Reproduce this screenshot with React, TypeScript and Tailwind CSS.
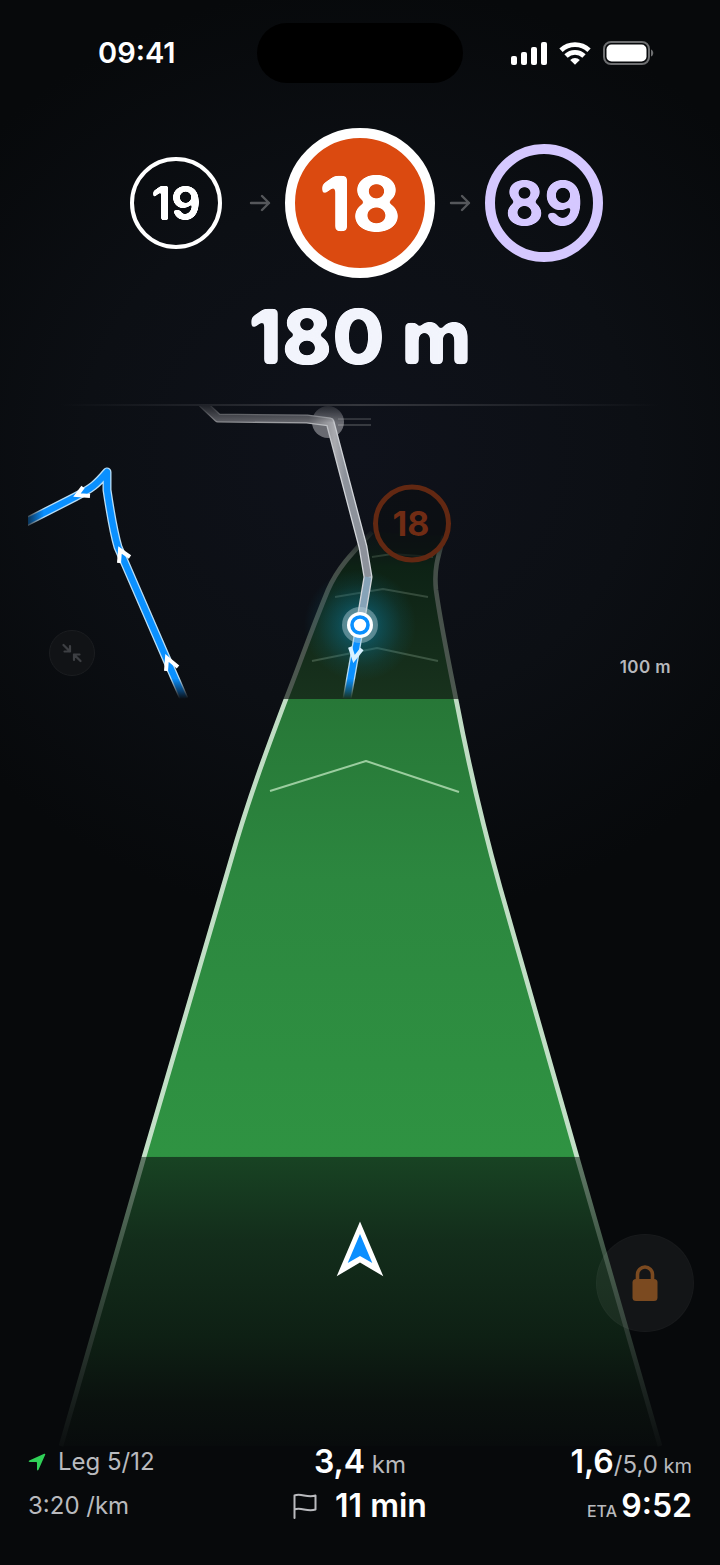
import type { ReactNode } from 'react';

type MarkerVariant = 'passed' | 'current' | 'next';

const markerStyles: Record<MarkerVariant, string> = {
    passed: 'size-[92px] border-4 border-white text-white text-[46px]',
    current: 'size-[150px] border-[10px] border-white bg-[#db4a10] text-white text-[76px]',
    next: 'size-[118px] border-[10px] border-[#d5c8ff] text-[#d5c8ff] text-[60px]',
};

const roadEdges = {
    left: 'M372 532C354 551 338 567 328 590C309 636 301 661 286 699C269 744 249 797 231 860L144 1157L61 1446',
    right: 'M444 536C437 559 434 571 436 590C441 626 450 669 457 704C465 746 480 815 500 887L577 1157L660 1446',
};

const chevrons = [
    { points: '270,791 366,761 459,792', stroke: '#9bcd9f' },
    { points: '312,661 377,648 438,661', stroke: '#3c5642' },
    { points: '335,597 383,589 428,597', stroke: '#344a3a' },
    { points: '372,557 392,554 433,557', stroke: '#2b3d31' },
];

const headings = [
    '83,487 77,495 90,496',
    '119,563 120,550 130,557',
    '166,671 167,658 178,667',
];

export default function App() {
    return (
        <main className="relative flex min-h-screen flex-col overflow-hidden bg-[#07090b] bg-[radial-gradient(ellipse_70%_30%_at_50%_29%,#0f121b_0%,#0c0f14_55%,#07090b_100%)] font-[Inter,sans-serif] text-white">
            <CornerFilter />
            <Road />
            <StatusBar />
            <Upcoming />
            <MapPanel />

            <div className="relative flex flex-1 items-end justify-end px-[26px] pb-[108px]">
                <button
                    type="button"
                    aria-label="Lock screen"
                    className="flex size-[98px] items-center justify-center rounded-full border border-white/2 bg-white/5"
                >
                    <svg viewBox="0 0 26 36" className="h-9 w-[26px]" fill="none">
                        <path d="M5.5 16V9.5a7.5 7.5 0 0 1 15 0V16" stroke="#7b4a20" strokeWidth="3.6" />
                        <rect x="0.5" y="14" width="25" height="22" rx="3.5" fill="#7b4a20" />
                    </svg>
                </button>
            </div>

            <Stats />
        </main>
    );
}

/* Rounds off the corners of the big numerals */
function CornerFilter() {
    return (
        <svg className="absolute size-0" aria-hidden="true">
            <filter id="soft-corners" colorInterpolationFilters="sRGB">
                <feGaussianBlur stdDeviation="2.2" />
                <feColorMatrix values="1 0 0 0 0  0 1 0 0 0  0 0 1 0 0  0 0 0 7 -2.8" />
            </filter>
            <filter id="soft-corners-sm" colorInterpolationFilters="sRGB">
                <feGaussianBlur stdDeviation="1.3" />
                <feColorMatrix values="1 0 0 0 0  0 1 0 0 0  0 0 1 0 0  0 0 0 5 -1.9" />
            </filter>
        </svg>
    );
}

function StatusBar() {
    return (
        <header className="relative grid grid-cols-[1fr_206px_1fr] items-center pt-[23px]">
            <span className="pl-[98px] text-[29px] leading-8 font-semibold">09:41</span>
            <div className="h-[60px] rounded-full bg-black" />
            <div className="flex items-center gap-3 pl-12">
                <svg viewBox="0 0 36 23" className="h-[23px] w-9 shrink-0" fill="#fff">
                    <rect x="0" y="14" width="6" height="9" rx="2" />
                    <rect x="10" y="10" width="6" height="13" rx="2" />
                    <rect x="20" y="5" width="6" height="18" rx="2" />
                    <rect x="30" y="0" width="6" height="23" rx="2" />
                </svg>
                <svg viewBox="0 0 32 23" className="h-[23px] w-8 shrink-0" fill="none" stroke="#fff" strokeWidth="4.8">
                    <path d="M2 8.2a20.2 20.2 0 0 1 28 0" />
                    <path d="M7 14a13 13 0 0 1 18 0" />
                    <path d="M16 22.8l-4.8-4.8a6.8 6.8 0 0 1 9.6 0z" fill="#fff" stroke="none" />
                </svg>
                <svg viewBox="0 0 51 24" className="h-6 w-[51px] shrink-0">
                    <rect x="1" y="1" width="45" height="22" rx="7" fill="none" stroke="#6d6e70" strokeWidth="2" />
                    <rect x="3.5" y="3.5" width="40" height="17" rx="5" fill="#fff" />
                    <path d="M48 8.5c3 1 3 6 0 7z" fill="#6d6e70" />
                </svg>
            </div>
        </header>
    );
}

function Upcoming() {
    return (
        <section className="relative flex flex-col items-center pt-[45px]">
            <div className="flex items-center gap-[14px]">
                <Slot>
                    <Marker variant="passed">19</Marker>
                </Slot>
                <Arrow />
                <Marker variant="current">18</Marker>
                <Arrow />
                <Slot>
                    <Marker variant="next">89</Marker>
                </Slot>
            </div>
            <h1 className="mt-[18px] text-[76px] leading-[80px] font-extrabold text-[#f2f4fc] [filter:url(#soft-corners)]">
                180 m
            </h1>
            <div className="mt-7 h-0.5 w-5/6 bg-linear-to-r from-transparent via-[#35373d] to-transparent" />
        </section>
    );
}

function Slot({ children }: { children: ReactNode }) {
    return <div className="flex w-[118px] justify-center">{children}</div>;
}

function Marker({ variant, children }: { variant: MarkerVariant; children: ReactNode }) {
    return (
        <div
            className={`flex shrink-0 items-center justify-center rounded-full leading-none font-bold ${markerStyles[variant]}`}
        >
            <span
                className={
                    variant === 'passed'
                        ? '[filter:url(#soft-corners-sm)]'
                        : '[filter:url(#soft-corners)]'
                }
            >
                {children}
            </span>
        </div>
    );
}

function Arrow() {
    return (
        <svg
            viewBox="0 0 22 18"
            className="h-[18px] w-[22px] shrink-0"
            fill="none"
            stroke="#55575b"
            strokeWidth="2.4"
            strokeLinecap="round"
            strokeLinejoin="round"
        >
            <path d="M2 9h18M13 2l7 7-7 7" />
        </svg>
    );
}

function Road() {
    return (
        <svg
            viewBox="0 0 720 1565"
            preserveAspectRatio="xMidYMin slice"
            className="absolute inset-0 size-full"
            fill="none"
        >
            <defs>
                <linearGradient id="surface" gradientUnits="userSpaceOnUse" x1="0" y1="500" x2="0" y2="1450">
                    <stop offset="0.02" stopColor="#0d1614" stopOpacity="0" />
                    <stop offset="0.07" stopColor="#0d2215" />
                    <stop offset="0.209" stopColor="#18321d" />
                    <stop offset="0.209" stopColor="#277737" />
                    <stop offset="0.4" stopColor="#2c873f" />
                    <stop offset="0.691" stopColor="#2f9342" />
                    <stop offset="0.692" stopColor="#184323" />
                    <stop offset="0.78" stopColor="#132d1b" />
                    <stop offset="0.88" stopColor="#0e2014" />
                    <stop offset="0.95" stopColor="#0a110e" />
                    <stop offset="1" stopColor="#080b0c" />
                </linearGradient>
                <linearGradient id="edge" gradientUnits="userSpaceOnUse" x1="0" y1="500" x2="0" y2="1450">
                    <stop offset="0.03" stopColor="#434d47" stopOpacity="0" />
                    <stop offset="0.06" stopColor="#434d47" />
                    <stop offset="0.209" stopColor="#4d5850" />
                    <stop offset="0.209" stopColor="#bfdcc3" />
                    <stop offset="0.691" stopColor="#c3e0c7" />
                    <stop offset="0.692" stopColor="#617967" />
                    <stop offset="0.8" stopColor="#3d5343" />
                    <stop offset="0.9" stopColor="#25302a" />
                    <stop offset="1" stopColor="#0b0e0f" />
                </linearGradient>
            </defs>
            <path
                d="M372 532C354 551 338 567 328 590C309 636 301 661 286 699C269 744 249 797 231 860L144 1157L61 1446H660L577 1157L500 887C480 815 465 746 457 704C450 669 441 626 436 590C434 571 437 559 444 536Z"
                fill="url(#surface)"
            />
            <g stroke="url(#edge)" strokeWidth="4.6">
                <path d={roadEdges.left} />
                <path d={roadEdges.right} />
            </g>
            {chevrons.map((c) => (
                <polyline key={c.points} points={c.points} stroke={c.stroke} strokeWidth="2" strokeLinejoin="round" />
            ))}
            <path d="M360 1221.5l23.3 54.8-23.3-13.8-23.3 13.8z" fill="#fff" />
            <path d="M360 1234l12.3 29-12.3-7-12.3 7z" fill="#0a8fff" />
        </svg>
    );
}

function MapPanel() {
    return (
        <section className="relative" aria-label="Map">
            <svg viewBox="0 406 720 293" className="block w-full" fill="none">
                <defs>
                    <radialGradient id="halo" gradientUnits="userSpaceOnUse" cx="360" cy="625" r="56">
                        <stop offset="0" stopColor="#0b8fc8" stopOpacity="0.65" />
                        <stop offset="0.4" stopColor="#0b7799" stopOpacity="0.4" />
                        <stop offset="0.75" stopColor="#0b7799" stopOpacity="0.12" />
                        <stop offset="1" stopColor="#0b7799" stopOpacity="0" />
                    </radialGradient>
                    <linearGradient id="fade-y" gradientUnits="userSpaceOnUse" x1="0" y1="405" x2="0" y2="699">
                        <stop offset="0" stopColor="#fff" stopOpacity="0.2" />
                        <stop offset="0.06" stopColor="#fff" />
                        <stop offset="0.93" stopColor="#fff" />
                        <stop offset="1" stopColor="#fff" stopOpacity="0" />
                    </linearGradient>
                    <linearGradient id="fade-x" gradientUnits="userSpaceOnUse" x1="28" y1="0" x2="44" y2="0">
                        <stop offset="0" stopColor="#fff" stopOpacity="0" />
                        <stop offset="0" stopColor="#fff" stopOpacity="0.3" />
                        <stop offset="1" stopColor="#fff" />
                    </linearGradient>
                    <linearGradient id="ahead" gradientUnits="userSpaceOnUse" x1="200" y1="0" x2="345" y2="0">
                        <stop offset="0" stopColor="#5c5d63" />
                        <stop offset="0.75" stopColor="#68696f" />
                        <stop offset="0.93" stopColor="#aaabb0" />
                        <stop offset="1" stopColor="#8d929b" />
                    </linearGradient>
                    <linearGradient id="ahead-casing" gradientUnits="userSpaceOnUse" x1="200" y1="0" x2="345" y2="0">
                        <stop offset="0" stopColor="#85868a" />
                        <stop offset="0.7" stopColor="#a3a4a8" />
                        <stop offset="1" stopColor="#d2d5da" />
                    </linearGradient>
                    <mask id="mask-y" maskUnits="userSpaceOnUse" x="0" y="405" width="720" height="294">
                        <rect x="0" y="405" width="720" height="294" fill="url(#fade-y)" />
                    </mask>
                    <mask id="mask-x" maskUnits="userSpaceOnUse" x="0" y="405" width="720" height="294">
                        <rect x="0" y="405" width="720" height="294" fill="url(#fade-x)" />
                    </mask>
                </defs>

                {/* Next control, on the horizon */}
                <circle cx="412" cy="523.5" r="36.5" fill="#0b0f11" fillOpacity="0.6" stroke="#622812" strokeWidth="5" />
                <text x="411" y="536" textAnchor="middle" className="text-[34px] font-bold" fill="#702c14">
                    18
                </text>

                <circle cx="360" cy="625" r="56" fill="url(#halo)" />

                <g mask="url(#mask-y)" strokeLinejoin="round">
                    <path d="M338 419h33M338 425h33" stroke="#46484d" strokeWidth="1.6" />
                    <circle cx="328" cy="422" r="16" fill="#d8d8dc" fillOpacity="0.45" />
                    <path d="M202 403L218 418L307 419L330 422L363 547L368 577L360 625" stroke="url(#ahead-casing)" strokeWidth="9" />
                    <path d="M202 403L218 418L307 419L330 422L363 547L368 577" stroke="url(#ahead)" strokeWidth="6.4" />
                    <path d="M368 577L360 625" stroke="#86a3b8" strokeWidth="6.4" />
                    <path d="M360 625L347 699" stroke="#b7dcf2" strokeWidth="9" />
                    <path d="M360 625L347 699" stroke="#0a90ff" strokeWidth="6.4" />
                    <g mask="url(#mask-x)">
                        <path d="M26 522L75 497C92 488 96 485 107 472V490C110 510 113 530 118 547L167 660L184 699" stroke="#b9ddf5" strokeWidth="9" />
                        <path d="M26 522L75 497C92 488 96 485 107 472V490C110 510 113 530 118 547L167 660L184 699" stroke="#0a90ff" strokeWidth="6.4" />
                    </g>
                    {headings.map((points) => (
                        <polyline key={points} points={points} stroke="#fff" strokeWidth="4" strokeLinejoin="miter" />
                    ))}
                    <polyline points="350,647 354,659 362,649" stroke="#d9f1ff" strokeWidth="4" strokeLinejoin="miter" />
                </g>

                {/* Current position */}
                <circle cx="360" cy="625" r="18" fill="#b5cfd8" fillOpacity="0.45" />
                <circle cx="360" cy="625" r="13" fill="#fff" />
                <circle cx="360" cy="625" r="8" fill="#fff" stroke="#0a90ff" strokeWidth="3.6" />
            </svg>

            <div className="absolute inset-x-[49px] bottom-5 flex items-center justify-between">
                <button
                    type="button"
                    aria-label="Collapse map"
                    className="flex size-[46px] items-center justify-center rounded-full border border-[#1b1d20] bg-[#111316]"
                >
                    <svg viewBox="0 0 20 20" className="size-5" fill="none" stroke="#3d3f43" strokeWidth="2.2" strokeLinecap="round" strokeLinejoin="round">
                        <path d="M1.5 2L8 8.5M8 3v5.5H2.5M18.5 18L12 11.5M12 17v-5.5h5.5" />
                    </svg>
                </button>
                <span className="pt-7 text-[17px] leading-6 font-semibold tracking-wide text-[#b7b8bc]">100 m</span>
            </div>
        </section>
    );
}

function Stats() {
    return (
        <footer className="relative grid grid-cols-3 px-7 pb-[37px] text-2xl leading-[44px] text-[#b9babe]">
            <div className="flex items-center gap-3">
                <svg viewBox="0 0 18 18" className="size-[18px] shrink-0" fill="#30d158">
                    <path d="M16.2 0.8Q17.6 0.4 17.2 1.8L10.5 16.7Q9.4 18.3 9 16.4V9.8Q9 9 8.2 9H1.6Q-0.3 8.600 1.3 7.5Z" />
                </svg>
                <span>Leg 5/12</span>
            </div>
            <Value className="text-center">
                3,4<Unit className="text-2xl"> km</Unit>
            </Value>
            <Value className="text-right">
                1,6<Unit className="text-2xl">/5,0</Unit>
                <Unit className="text-xl"> km</Unit>
            </Value>
            <div>3:20 /km</div>
            <Value className="flex items-center justify-center gap-[18px]">
                <svg viewBox="0 0 24 26" className="h-[26px] w-6 shrink-0" fill="none" stroke="#b9babe" strokeWidth="2" strokeLinecap="round" strokeLinejoin="round">
                    <path d="M1.5 25V2.5C8-0.5 14 5.5 22.5 2.5V16.5C14 19.5 8 13.5 1.5 16.5" />
                </svg>
                11 min
            </Value>
            <Value className="text-right">
                <Unit className="text-base font-medium">ETA </Unit>9:52
            </Value>
        </footer>
    );
}

function Value({ className, children }: { className: string; children: ReactNode }) {
    return <div className={`h-11 text-[32px] leading-[44px] font-semibold text-white ${className}`}>{children}</div>;
}

function Unit({ className, children }: { className: string; children: ReactNode }) {
    return (
        <span className={className.includes('font-') ? `text-[#b9babe] ${className}` : `font-normal text-[#b9babe] ${className}`}>
            {children}
        </span>
    );
}
